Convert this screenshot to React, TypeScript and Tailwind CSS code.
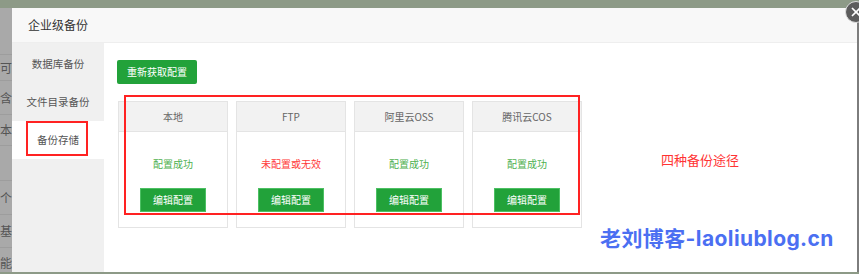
import { X } from "lucide-react";

type Store = { name: string; ok: boolean };

const stores: Store[] = [
  { name: "本地", ok: true },
  { name: "FTP", ok: false },
  { name: "阿里云OSS", ok: true },
  { name: "腾讯云COS", ok: true },
];

// rows of the page that lies under the mask, only their last letters show
const behind = [
  { text: "", h: "h-[47px]" },
  { text: "可", h: "h-[26px]" },
  { text: "含", h: "h-[34px]" },
  { text: "脚本", h: "h-[31px]" },
  { text: "", h: "h-[35px]" },
  { text: "个", h: "h-[34px]" },
  { text: "基", h: "h-[33px]" },
  { text: "功能", h: "h-[30px]" },
];

const font = "font-['Microsoft_YaHei','Noto_Sans_CJK_SC',sans-serif]";

function StoreCard({ store }: { store: Store }) {
  return (
    <div className="w-[110px] h-[127px] border border-[#e4e4e4] bg-white flex flex-col">
      <div className="h-[30px] bg-[#f2f2f2] border-b border-[#e4e4e4] flex items-center justify-center text-[10px] text-[#666]">
        {store.name}
      </div>
      <div className="flex flex-col items-center pt-[25px]">
        <span
          className={
            "text-[10px] leading-[14px] " +
            (store.ok ? "text-[#4fb150]" : "text-[#ff3b3b]")
          }
        >
          {store.ok ? "配置成功" : "未配置或无效"}
        </span>
        <button className="mt-[17px] w-[66px] h-[24px] bg-[#22a23a] border border-[#4cc063] text-white text-[10px]">
          编辑配置
        </button>
      </div>
    </div>
  );
}

export default function App() {
  return (
    <div
      className={`relative w-[859px] h-[274px] overflow-hidden bg-[#8d9a87] ${font}`}
    >
      <div className="h-[10px] border-b-2 border-[#8a8a8a]" />
      <div className="flex h-[264px] -mt-[2px]">
        {/* page behind the mask */}
        <div className="w-[12px] bg-[#a9a9a9] flex flex-col">
          {behind.map((b, i) => (
            <div
              key={i}
              className={`${b.h} shrink-0 border-b border-[#9d9d9d] flex items-center justify-end overflow-hidden text-[12px] text-[#555] whitespace-nowrap`}
            >
              {b.text}
            </div>
          ))}
        </div>

        {/* dialog */}
        <div className="flex-1 flex flex-col bg-white border-r-2 border-[#7d7d7d]">
          <div className="h-[35px] bg-[#f8f8f8] border-b border-[#eeeeee] flex items-center pl-[16px] text-[12px] text-[#333]">
            企业级备份
          </div>
          <div className="flex flex-1">
            <div className="w-[92px] bg-[#f0f0f0] flex flex-col text-[10.5px] text-[#555] pt-[2px]">
              <div className="h-[38px] flex items-center justify-center">数据库备份</div>
              <div className="h-[38px] flex items-center justify-center">文件目录备份</div>
              <div className="h-[38px] bg-white flex items-center justify-center relative">
                备份存储
                <div className="absolute left-[14px] top-0 w-[62px] h-[35px] border-2 border-[#f22]" />
              </div>
            </div>

            <div className="relative flex-1 pl-[13px] pt-[14px]">
              <button className="w-[80px] h-[24px] bg-[#22a23a] rounded-[2px] text-white text-[10px]">
                重新获取配置
              </button>
              <div className="flex gap-[8px] mt-[17px] ml-[1px]">
                {stores.map((s) => (
                  <StoreCard key={s.name} store={s} />
                ))}
              </div>
              <div className="absolute left-[20px] top-[52px] w-[456px] h-[120px] border-2 border-[#f22]" />
              <div className="absolute left-[557px] top-[107px] text-[13px] text-[#f33]">
                四种备份途径
              </div>
            </div>
          </div>
        </div>
      </div>

      <div className="absolute left-[856px] top-[12px] -translate-x-1/2 -translate-y-1/2 w-[22px] h-[22px] rounded-full bg-[#5c5c5c] border border-[#ddd] flex items-center justify-center">
        <X className="w-[14px] h-[14px] text-white" strokeWidth={3} />
      </div>

      <div className="absolute left-[600px] top-[223px] text-[21px] font-bold text-[#4b6ff2] font-['Inter','Noto_Sans_CJK_SC',sans-serif] tracking-[0.4px]">
        老刘博客-laoliublog.cn
      </div>
    </div>
  );
}
